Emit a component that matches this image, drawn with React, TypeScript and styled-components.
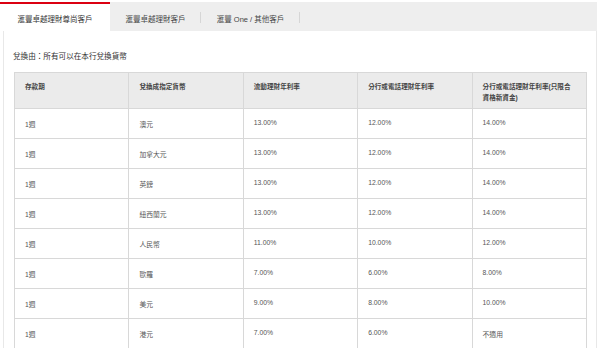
import React from "react";
import styled, { createGlobalStyle } from "styled-components";

const GlobalStyle = createGlobalStyle`
  html, body { margin: 0; padding: 0; background: #ffffff; overflow: hidden; height: 348px; }
  body {
    font-family: "Liberation Sans", "Noto Sans CJK TC", sans-serif;
    color: #333333;
  }
`;

const Page = styled.div`
  width: 600px;
  height: 348px;
  overflow: hidden;
  box-sizing: border-box;
  display: flex;
  flex-direction: column;
  background: #ffffff;
`;

const TabBar = styled.div`
  display: flex;
  flex: none;
  height: 29px;
  margin-top: 2px;
  margin-right: 3px;
  background: #eeeeee;
`;

const Tab = styled.div<{ $active?: boolean; $w: number; $sep?: boolean }>`
  position: relative;
  width: ${(p) => p.$w}px;
  box-sizing: border-box;
  display: flex;
  align-items: center;
  justify-content: center;
  font-size: 7.5px;
  color: ${(p) => (p.$active ? "#333333" : "#444444")};
  background: ${(p) => (p.$active ? "#ffffff" : "transparent")};
  padding-top: 3px;
  white-space: nowrap;
  &::before {
    content: "";
    display: ${(p) => (p.$active ? "block" : "none")};
    position: absolute;
    left: 0;
    right: 0;
    top: 0;
    height: 2px;
    background: #db0011;
  }
  &::after {
    content: "";
    display: ${(p) => (p.$sep ? "block" : "none")};
    position: absolute;
    right: 0;
    top: 10px;
    height: 11px;
    width: 1px;
    background: #d6d6d6;
  }
`;

const Panel = styled.div`
  flex: 1;
  min-height: 0;
  overflow: hidden;
  box-sizing: border-box;
  margin: 0 3px;
  border-left: 1px solid #e8e8e8;
  border-right: 1px solid #e8e8e8;
  padding: 21px 9px 0 9px;
`;

const Note = styled.div`
  font-size: 7.6px;
  line-height: 10px;
  color: #333333;
  margin-bottom: 10px;
`;

const Table = styled.table`
  width: 573px;
  margin-left: 1px;
  border-collapse: collapse;
  table-layout: fixed;
`;

const HeadRow = styled.tr`
  height: 36px;
  background: #ebebeb;
`;

const BodyRow = styled.tr`
  height: 30px;
  background: #ffffff;
`;

const Th = styled.th`
  border: 1px solid #d8d8d8;
  text-align: left;
  vertical-align: top;
  padding: 9px 10px 0 10px;
  font-size: 6.6px;
  line-height: 10.5px;
  font-weight: bold;
  color: #444444;
`;

const Td = styled.td<{ $num?: boolean }>`
  border: 1px solid #d8d8d8;
  text-align: left;
  vertical-align: top;
  padding: ${(p) => (p.$num ? "9px" : "11px")} 10px 0 10px;
  font-size: 6.8px;
  line-height: 10px;
  color: #555555;
`;

type Row = [string, string, string, string, string];

const rows: Row[] = [
  ["1週", "澳元", "13.00%", "12.00%", "14.00%"],
  ["1週", "加拿大元", "13.00%", "12.00%", "14.00%"],
  ["1週", "英鎊", "13.00%", "12.00%", "14.00%"],
  ["1週", "紐西蘭元", "13.00%", "12.00%", "14.00%"],
  ["1週", "人民幣", "11.00%", "10.00%", "12.00%"],
  ["1週", "歐羅", "7.00%", "6.00%", "8.00%"],
  ["1週", "美元", "9.00%", "8.00%", "10.00%"],
  ["1週", "港元", "7.00%", "6.00%", "不適用"],
];

const isNum = (s: string) => /%$/.test(s);

export default function App() {
  return (
    <>
      <GlobalStyle />
      <Page>
        <TabBar>
          <Tab $active $w={110}>滙豐卓越理財尊尚客戶</Tab>
          <Tab $w={91} $sep>滙豐卓越理財客戶</Tab>
          <Tab $w={99} $sep>滙豐 One / 其他客戶</Tab>
        </TabBar>
        <Panel>
          <Note>兌換由：所有可以在本行兌換貨幣</Note>
          <Table>
            <thead>
              <HeadRow>
                <Th>存款期</Th>
                <Th>兌換成指定貨幣</Th>
                <Th>流動理財年利率</Th>
                <Th>分行或電話理財年利率</Th>
                <Th>分行或電話理財年利率(只限合資格新資金)</Th>
              </HeadRow>
            </thead>
            <tbody>
              {rows.map((r, i) => (
                <BodyRow key={i}>
                  {r.map((c, j) => (
                    <Td key={j} $num={isNum(c)}>
                      {c}
                    </Td>
                  ))}
                </BodyRow>
              ))}
            </tbody>
          </Table>
        </Panel>
      </Page>
    </>
  );
}
